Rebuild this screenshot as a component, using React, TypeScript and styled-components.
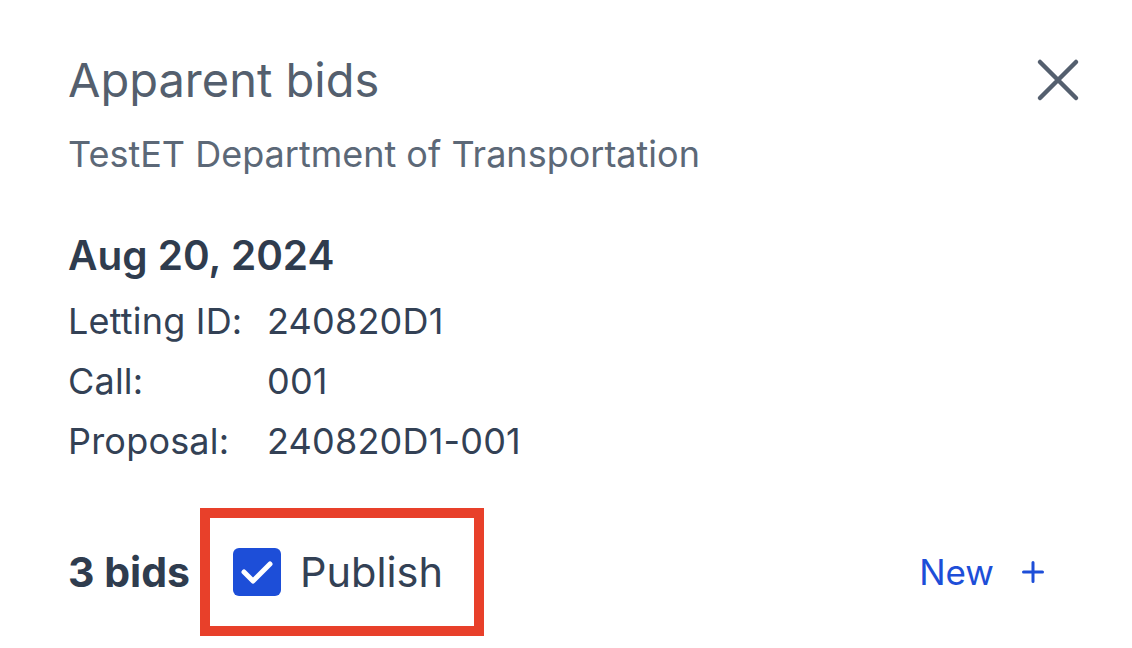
import React from 'react'
import styled, { createGlobalStyle } from 'styled-components'

const GlobalStyle = createGlobalStyle`
  html, body {
    margin: 0;
    padding: 0;
    background: #ffffff;
  }
  body {
    font-family: Inter, "Noto Sans", "Liberation Sans", sans-serif;
  }
`

const Panel = styled.section`
  width: 1132px;
  height: 648px;
  box-sizing: border-box;
  padding: 52px 52px 0 68px;
  display: flex;
  flex-direction: column;
`

const Header = styled.header`
  display: flex;
  flex-direction: row;
  justify-content: space-between;
  align-items: flex-start;
`

const Title = styled.h1`
  margin: 0;
  font-size: 47px;
  line-height: 56px;
  font-weight: 400;
  color: #545f6e;
`

const CloseButton = styled.button`
  border: 0;
  background: none;
  padding: 0;
  margin: 6px 0 0 0;
  width: 44px;
  height: 44px;
  display: flex;
  align-items: center;
  justify-content: center;
  color: #545f6e;
  cursor: pointer;
`

const Subtitle = styled.p`
  margin: 24px 0 0 0;
  font-size: 36px;
  line-height: 44px;
  color: #5c6877;
`

const DateHeading = styled.h2`
  margin: 56px 0 0 0;
  font-size: 40.5px;
  line-height: 48px;
  font-weight: 600;
  color: #2f3c4e;
`

const InfoList = styled.dl`
  margin: 11px 0 0 0;
  display: grid;
  grid-template-columns: 199px auto;
  grid-auto-rows: 60px;
  align-items: center;
  font-size: 36px;
  letter-spacing: 0.2px;
  color: #334155;
`

const Label = styled.dt`
  margin: 0;
`

const Value = styled.dd`
  margin: 0;
`

const Footer = styled.footer`
  margin-top: 37px;
  display: flex;
  flex-direction: row;
  align-items: center;
`

const BidCount = styled.span`
  font-size: 41px;
  font-weight: 700;
  color: #2f3c4e;
`

const Highlight = styled.div`
  margin-left: 10px;
  box-sizing: border-box;
  width: 284px;
  height: 128px;
  border: 10px solid #e8402a;
  padding: 0 0 0 23px;
  display: flex;
  align-items: center;
`

const CheckLabel = styled.label`
  display: flex;
  flex-direction: row;
  align-items: center;
  gap: 19px;
  font-size: 41.5px;
  color: #334155;
  cursor: pointer;
`

const CheckBox = styled.span<{ $checked: boolean }>`
  width: 48px;
  height: 48px;
  border-radius: 6px;
  background: ${p => (p.$checked ? '#1d4ed8' : '#ffffff')};
  display: flex;
  align-items: center;
  justify-content: center;
`

const NewButton = styled.button`
  margin-left: auto;
  margin-right: 36px;
  border: 0;
  background: none;
  padding: 0;
  display: flex;
  align-items: center;
  gap: 28px;
  font-family: inherit;
  font-size: 35px;
  color: #1d4ed8;
  cursor: pointer;
`

const rows = [
  { label: 'Letting ID:', value: '240820D1' },
  { label: 'Call:', value: '001' },
  { label: 'Proposal:', value: '240820D1-001' },
]

export default function App(): JSX.Element {
  return (
    <>
      <GlobalStyle />
      <Panel>
        <Header>
          <Title>Apparent bids</Title>
          <CloseButton aria-label="Close">
            <svg width="44" height="44" viewBox="0 0 44 44" fill="none">
              <path d="M4 4L40 40M40 4L4 40" stroke="currentColor" strokeWidth="4.5" strokeLinecap="round" />
            </svg>
          </CloseButton>
        </Header>
        <Subtitle>TestET Department of Transportation</Subtitle>
        <DateHeading>Aug 20, 2024</DateHeading>
        <InfoList>
          {rows.map(r => (
            <React.Fragment key={r.label}>
              <Label>{r.label}</Label>
              <Value>{r.value}</Value>
            </React.Fragment>
          ))}
        </InfoList>
        <Footer>
          <BidCount>3 bids</BidCount>
          <Highlight>
            <CheckLabel>
              <CheckBox $checked>
                <svg width="48" height="48" viewBox="0 0 48 48" fill="none">
                  <path d="M11 24L20 33L37 16" stroke="#ffffff" strokeWidth="5" strokeLinecap="round" strokeLinejoin="round" />
                </svg>
              </CheckBox>
              Publish
            </CheckLabel>
          </Highlight>
          <NewButton>
            New
            <svg width="22" height="22" viewBox="0 0 22 22" fill="none">
              <path d="M11 1.5V20.5M1.5 11H20.5" stroke="currentColor" strokeWidth="3" strokeLinecap="round" />
            </svg>
          </NewButton>
        </Footer>
      </Panel>
    </>
  )
}
